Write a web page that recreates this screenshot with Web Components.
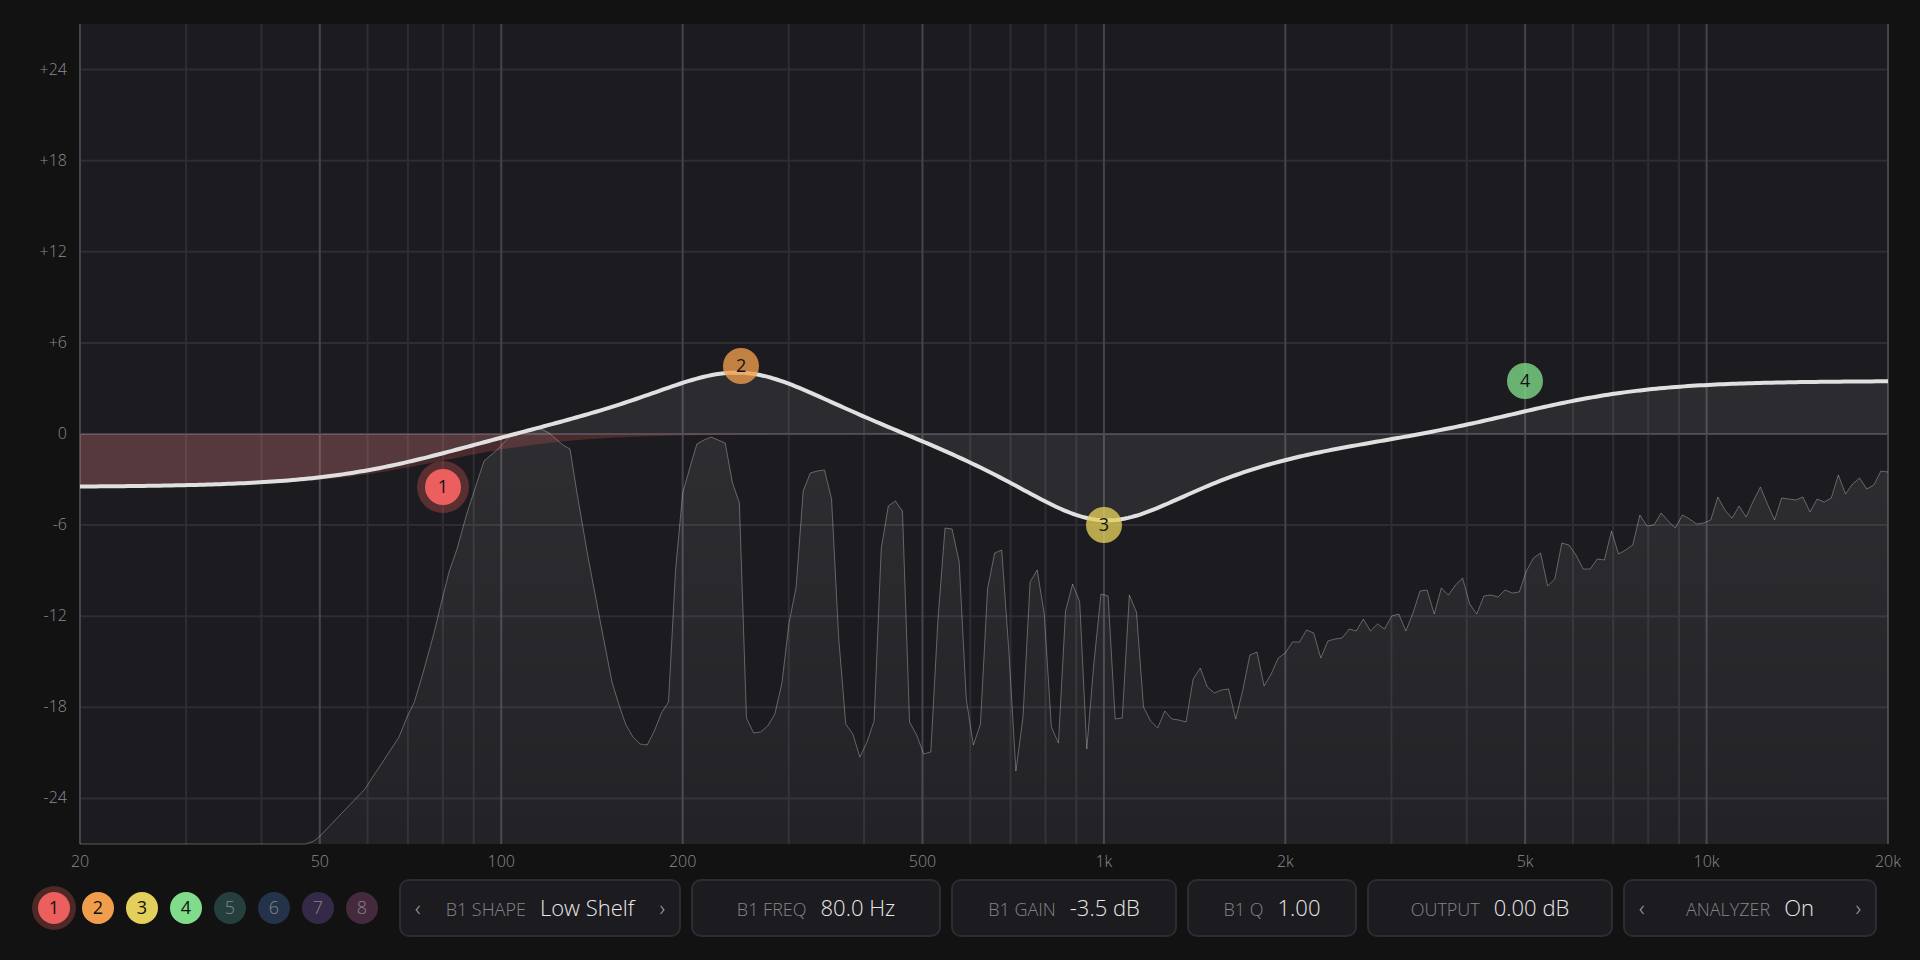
<!DOCTYPE html>
<html lang="en">
<head>
<meta charset="utf-8">
<title>Equalizer</title>
<style>
    body{
        margin: 0;
        background: #121212;
        font-family: 'Open Sans', 'Noto Sans', sans-serif;
        font-weight: 300;
    }
</style>
</head>
<body>

<eq-app></eq-app>

<template id="appTemplate">
    <style>
        :host{
            display: flex;
            flex-direction: column;
            box-sizing: border-box;
            min-height: 100vh;
            padding: 24px 0 23px;
        }
        eq-graph{
            flex: 1;
        }
        footer{
            display: flex;
            align-items: center;
            gap: 21px;
            padding: 0 43px 0 38px;
        }
        .bands{
            display: flex;
            gap: 12px;
        }
        .params{
            flex: 1;
            display: grid;
            grid-template-columns: 282fr 250fr 226fr 170fr 246fr 254fr;
            gap: 10px;
        }
    </style>

    <eq-graph></eq-graph>

    <footer>
        <div class="bands">
            <band-dot color="#eb5f5f" active>1</band-dot>
            <band-dot color="#f09d4d">2</band-dot>
            <band-dot color="#e3d05c">3</band-dot>
            <band-dot color="#80dc8a">4</band-dot>
            <band-dot color="#243f3d" off>5</band-dot>
            <band-dot color="#243349" off>6</band-dot>
            <band-dot color="#342a47" off>7</band-dot>
            <band-dot color="#452a3d" off>8</band-dot>
        </div>
        <div class="params">
            <param-box label="B1 SHAPE" stepper>Low Shelf</param-box>
            <param-box label="B1 FREQ">80.0 Hz</param-box>
            <param-box label="B1 GAIN">-3.5 dB</param-box>
            <param-box label="B1 Q">1.00</param-box>
            <param-box label="OUTPUT">0.00 dB</param-box>
            <param-box label="ANALYZER" stepper>On</param-box>
        </div>
    </footer>
</template>

<template id="graphTemplate">
    <style>
        :host{
            display: grid;
            grid-template-columns: 80px 1fr 32px;
            grid-template-rows: 1fr 35px;
            font-size: 16px;
            line-height: 20px;
            color: #8c8b91;
        }
        .levels{
            display: grid;
            grid-template-rows: repeat(9, 1fr);
            align-items: center;
            justify-items: end;
            padding-right: 13px;
        }
        .levels span, .freqs span{
            padding-bottom: 2px;
        }
        .plot{
            position: relative;
            min-height: 300px;
            border-radius: 4px;
            background: #1c1b1f;
        }
        svg{
            position: absolute;
            width: 100%;
            height: 100%;
            overflow: visible;
        }
        path{
            fill: none;
            vector-effect: non-scaling-stroke;
        }
        .minor{ stroke: #2e2d33; stroke-width: 2; }
        .major{ stroke: #45444d; stroke-width: 2; }
        .spectrumFill{ fill: url(#fade); }
        .spectrumLine{ stroke: #ffffff; stroke-opacity: 0.3; stroke-width: 1; }
        .bandFill{ fill: #eb5f5f; fill-opacity: 0.22; }
        .sumFill{ fill: #ffffff; fill-opacity: 0.075; }
        .sumLine{ stroke: #e0e0e0; stroke-width: 4; stroke-linejoin: round; }
        eq-node{
            position: absolute;
            transform: translate(-50%, -50%);
        }
        .freqs{
            grid-column: 2;
            display: grid;
            align-items: center;
        }
        .freqs span{
            display: flex;
            justify-content: center;
            width: 0;
        }
    </style>

    <div class="levels"></div>
    <div class="plot">
        <svg viewBox="0 0 1808 820" preserveAspectRatio="none" aria-hidden="true">
            <defs>
                <linearGradient id="fade" gradientUnits="userSpaceOnUse" x1="0" y1="400" x2="0" y2="820">
                    <stop offset="0" stop-color="#fff" stop-opacity="0.08"/>
                    <stop offset="1" stop-color="#fff" stop-opacity="0.03"/>
                </linearGradient>
            </defs>
            <path class="minor"/>
            <path class="major"/>
            <path class="spectrumFill"/>
            <path class="spectrumLine"/>
            <path class="bandFill"/>
            <path class="sumFill"/>
            <path class="sumLine"/>
        </svg>
    </div>
    <div class="freqs"></div>
</template>

<template id="nodeTemplate">
    <style>
        :host{
            display: block;
        }
        button{
            display: block;
            width: 36px;
            height: 36px;
            padding: 0 0 2px;
            border: 0;
            border-radius: 50%;
            background: color-mix(in srgb, var(--band) 78%, transparent);
            color: #121212;
            font: inherit;
            font-size: 18px;
            font-weight: 400;
            line-height: 34px;
        }
        :host([active]) button{
            background: var(--band);
            box-shadow: 0 0 0 8px color-mix(in srgb, var(--band) 30%, transparent);
        }
    </style>
    <button type="button"><slot></slot></button>
</template>

<template id="dotTemplate">
    <style>
        :host{
            display: block;
        }
        button{
            display: block;
            width: 32px;
            height: 32px;
            padding: 0 0 2px;
            border: 0;
            border-radius: 50%;
            background: var(--band);
            color: #121212;
            font: inherit;
            font-size: 18px;
            font-weight: 400;
            line-height: 30px;
        }
        :host([active]) button{
            box-shadow: 0 0 0 6px color-mix(in srgb, var(--band) 28%, transparent);
        }
        :host([off]) button{
            color: #85848a;
            font-weight: 300;
        }
    </style>
    <button type="button"><slot></slot></button>
</template>

<template id="paramTemplate">
    <style>
        :host{
            display: flex;
            align-items: center;
            box-sizing: border-box;
            min-width: 0;
            height: 58px;
            padding: 0 14px 2px;
            border: 2px solid #2d2c32;
            border-radius: 10px;
            background: #1c1b1f;
            white-space: nowrap;
        }
        .field{
            flex: 1;
            display: flex;
            justify-content: center;
            align-items: baseline;
            gap: 14px;
        }
        label{
            font-size: 18px;
            color: #85848a;
        }
        output{
            font-size: 22px;
            color: #e8e8e8;
        }
        button{
            padding: 0;
            border: 0;
            background: none;
            color: #a5a4aa;
            font: inherit;
            font-size: 22px;
            line-height: 30px;
        }
        :host(:not([stepper])) button{
            display: none;
        }
    </style>
    <button type="button" aria-label="Previous">‹</button>
    <div class="field">
        <label for="value"></label>
        <output id="value"><slot></slot></output>
    </div>
    <button type="button" aria-label="Next">›</button>
</template>

<script>
const WIDTH = 1808;
const HEIGHT = 820;
const RANGE_DB = 27;
const MIN_FREQ = 20;

const LEVELS = [24, 18, 12, 6, 0, -6, -12, -18, -24];
const FREQS = [20, 50, 100, 200, 500, 1000, 2000, 5000, 10000, 20000];

const BANDS = [
    { type: 'lowShelf', freq: 80, gain: -3.5, q: Math.SQRT1_2, color: '#eb5f5f' },
    { type: 'peak', freq: 250, gain: 4.5, q: 1, color: '#f09d4d' },
    { type: 'peak', freq: 1000, gain: -6, q: 1, color: '#e3d05c' },
    { type: 'highShelf', freq: 5000, gain: 3.5, q: Math.SQRT1_2, color: '#80dc8a' }
];

// analyzer: loose points for the low end, then one level for each bin
const LOW_END = [
    [0, 820], [226, 820], [234, 817], [240, 812], [285, 765], [292, 754], [302, 739],
    [319, 713], [327, 693], [334, 679], [343, 649], [354, 609], [361, 580], [369, 548],
    [377, 525], [387, 489], [404, 437], [418, 425], [432, 410], [446, 406], [461, 405],
    [469, 409], [483, 421], [490, 425], [497, 469], [508, 533], [520, 596], [532, 658],
    [539, 681]
];
const FIRST_BIN = 77;
const LAST_BIN = 255;
const BINS = [
    701, 713, 720, 721, 707, 689, 678, 546, 469, 444, 420, 416, 413, 416, 419, 458, 479,
    694, 709, 708, 702, 690, 659, 599, 563, 467, 449, 447, 446, 475, 613, 700, 710, 733,
    718, 697, 525, 482, 477, 487, 698, 711, 730, 728, 596, 504, 505, 538, 675, 721, 700,
    565, 529, 526, 626, 747, 693, 558, 546, 590, 703, 719, 587, 560, 578, 725, 639, 570,
    572, 695, 694, 571, 588, 683, 697, 704, 687, 695, 696, 698, 655, 644, 663, 669, 666,
    665, 695, 666, 631, 628, 662, 650, 634, 629, 618, 618, 606, 609, 634, 617, 615, 614,
    605, 607, 595, 607, 600, 605, 592, 590, 607, 589, 567, 566, 590, 564, 571, 561, 554,
    580, 590, 572, 571, 573, 566, 569, 568, 547, 534, 529, 562, 555, 519, 521, 531, 545,
    545, 535, 536, 507, 530, 526, 521, 491, 502, 501, 489, 497, 504, 491, 495, 500, 499,
    496, 473, 486, 494, 482, 493, 477, 463, 480, 496, 474, 475, 476, 473, 488, 475, 478,
    474, 451, 470, 460, 454, 465, 461, 447, 448
];

function xOf(freq){
    return Math.log10(freq / MIN_FREQ) / 3 * WIDTH;
}

function yOf(db){
    return (RANGE_DB - db) / (2 * RANGE_DB) * HEIGHT;
}

// magnitude of the analog prototype, in dB
function bandGain(band, freq){
    const a = Math.pow(10, band.gain / 40);
    const w = band.type === 'highShelf' ? band.freq / freq : freq / band.freq;
    const w2 = w * w;

    if(band.type === 'peak'){
        const re = (1 - w2) * (1 - w2);
        return 10 * Math.log10((re + w2 * a * a / (band.q * band.q)) / (re + w2 / (a * a * band.q * band.q)));
    }

    const im = w2 * a / (band.q * band.q);
    return 10 * Math.log10(a * a * (Math.pow(a - w2, 2) + im) / (Math.pow(1 - a * w2, 2) + im));
}

function curve(gainAt){
    const points = [];
    for(let x = 0; x <= WIDTH; x += 4){
        const freq = MIN_FREQ * Math.pow(10, 3 * x / WIDTH);
        points.push(x + ' ' + yOf(gainAt(freq)).toFixed(2));
    }
    return points.join('L');
}

class EqElement extends HTMLElement{

    constructor(templateId){
        super();

        this.attachShadow({mode:'open'});
        this.shadowRoot.appendChild(document.getElementById(templateId).content.cloneNode(true));
    }

    connectedCallback(){
        if(this.hasAttribute('color')){
            this.style.setProperty('--band', this.getAttribute('color'));
        }
    }
}

class EqNode extends EqElement{
    constructor(){
        super('nodeTemplate');
    }
}

class BandDot extends EqElement{
    constructor(){
        super('dotTemplate');
    }
}

class ParamBox extends EqElement{
    constructor(){
        super('paramTemplate');
    }

    connectedCallback(){
        this.shadowRoot.querySelector('label').textContent = this.getAttribute('label');
    }
}

class EqGraph extends EqElement{
    constructor(){
        super('graphTemplate');
    }

    connectedCallback(){
        this.drawGrid();
        this.drawSpectrum();
        this.drawCurves();
        this.addLabels();
        this.addNodes();
    }

    setPath(name, d){
        this.shadowRoot.querySelector('.' + name).setAttribute('d', d);
    }

    drawGrid(){
        let minor = '';
        let major = '';

        for(let decade = 10; decade <= 10000; decade *= 10){
            for(let n = 1; n < 10; n++){
                const freq = decade * n;
                if(freq < 20 || freq > 20000){
                    continue;
                }
                const line = `M${xOf(freq)} 0V${HEIGHT}`;
                if(FREQS.includes(freq)){
                    major += line;
                }else{
                    minor += line;
                }
            }
        }

        for(const db of LEVELS){
            const line = `M0 ${yOf(db)}H${WIDTH}`;
            if(db === 0){
                major += line;
            }else{
                minor += line;
            }
        }

        this.setPath('minor', minor);
        this.setPath('major', major);
    }

    drawSpectrum(){
        const points = LOW_END.concat(BINS.map((y, i) => [(FIRST_BIN + i) / LAST_BIN * WIDTH, y]));
        const line = 'M' + points.map(p => p.join(' ')).join('L');

        this.setPath('spectrumLine', line);
        this.setPath('spectrumFill', `${line}V${HEIGHT}H0Z`);
    }

    drawCurves(){
        const zero = yOf(0);
        const band = curve(freq => bandGain(BANDS[0], freq));
        const sum = curve(freq => BANDS.reduce((total, b) => total + bandGain(b, freq), 0));

        this.setPath('bandFill', `M0 ${zero}L${band}V${zero}Z`);
        this.setPath('sumFill', `M0 ${zero}L${sum}V${zero}Z`);
        this.setPath('sumLine', 'M' + sum);
    }

    addLabels(){
        const levels = this.shadowRoot.querySelector('.levels');
        for(const db of LEVELS){
            const label = document.createElement('span');
            label.textContent = db > 0 ? '+' + db : db;
            levels.appendChild(label);
        }

        const freqs = this.shadowRoot.querySelector('.freqs');
        const columns = [];
        FREQS.forEach((freq, i) => {
            const label = document.createElement('span');
            label.textContent = freq < 1000 ? freq : freq / 1000 + 'k';
            freqs.appendChild(label);
            columns.push(i < FREQS.length - 1 ? `${xOf(FREQS[i + 1]) - xOf(freq)}fr` : '0');
        });
        freqs.style.gridTemplateColumns = columns.join(' ');
    }

    addNodes(){
        const plot = this.shadowRoot.querySelector('.plot');
        BANDS.forEach((band, i) => {
            const node = document.createElement('eq-node');
            node.textContent = i + 1;
            node.setAttribute('color', band.color);
            node.toggleAttribute('active', i === 0);
            node.style.left = xOf(band.freq) / WIDTH * 100 + '%';
            node.style.top = yOf(band.gain) / HEIGHT * 100 + '%';
            plot.appendChild(node);
        });
    }
}

class EqApp extends EqElement{
    constructor(){
        super('appTemplate');
    }
}

window.customElements.define('eq-node', EqNode);
window.customElements.define('band-dot', BandDot);
window.customElements.define('param-box', ParamBox);
window.customElements.define('eq-graph', EqGraph);
window.customElements.define('eq-app', EqApp);
</script>
</body>
</html>
